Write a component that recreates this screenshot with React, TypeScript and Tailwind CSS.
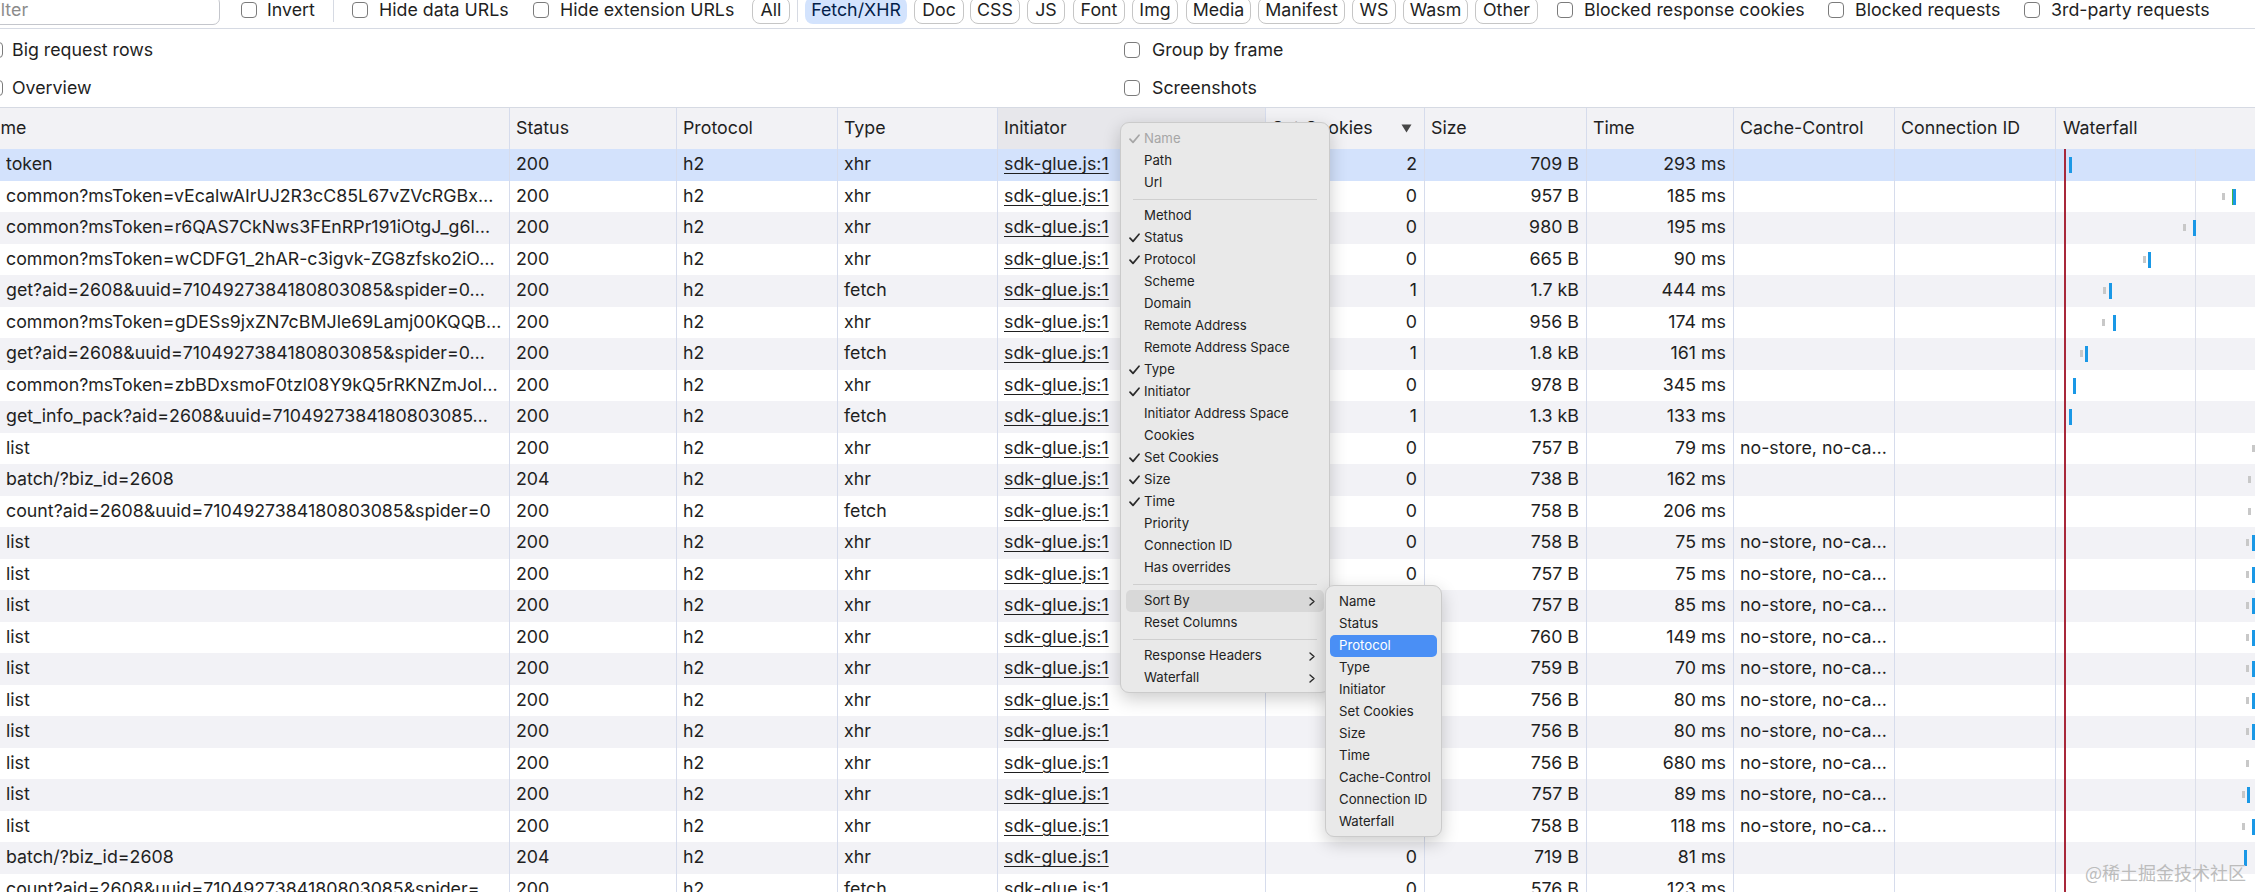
import React from "react";

type Bar = { x: number; k: "b" | "g" | "e" };
type Row = {
  name: string;
  status: string;
  type: string;
  cookies: string;
  size: string;
  time: string;
  cache?: string;
  bars: Bar[];
};

const NS = "no-store, no-ca…";
const GET = "get?aid=2608&uuid=7104927384180803085&spider=0…";
const COUNT = "count?aid=2608&uuid=7104927384180803085&spider=0";

const ROWS: Row[] = [
  { name: "token", status: "200", type: "xhr", cookies: "2", size: "709 B", time: "293 ms", bars: [{ x: 13, k: "b" }] },
  { name: "common?msToken=vEcalwAIrUJ2R3cC85L67vZVcRGBx…", status: "200", type: "xhr", cookies: "0", size: "957 B", time: "185 ms", bars: [{ x: 166, k: "g" }, { x: 176, k: "e" }, { x: 177, k: "b" }] },
  { name: "common?msToken=r6QAS7CkNws3FEnRPr191iOtgJ_g6l…", status: "200", type: "xhr", cookies: "0", size: "980 B", time: "195 ms", bars: [{ x: 127, k: "g" }, { x: 137, k: "b" }] },
  { name: "common?msToken=wCDFG1_2hAR-c3igvk-ZG8zfsko2iO…", status: "200", type: "xhr", cookies: "0", size: "665 B", time: "90 ms", bars: [{ x: 87, k: "g" }, { x: 92, k: "b" }] },
  { name: GET, status: "200", type: "fetch", cookies: "1", size: "1.7 kB", time: "444 ms", bars: [{ x: 47, k: "g" }, { x: 53, k: "b" }] },
  { name: "common?msToken=gDESs9jxZN7cBMJle69Lamj00KQQB…", status: "200", type: "xhr", cookies: "0", size: "956 B", time: "174 ms", bars: [{ x: 46, k: "g" }, { x: 57, k: "b" }] },
  { name: GET, status: "200", type: "fetch", cookies: "1", size: "1.8 kB", time: "161 ms", bars: [{ x: 24, k: "g" }, { x: 29, k: "b" }] },
  { name: "common?msToken=zbBDxsmoF0tzl08Y9kQ5rRKNZmJol…", status: "200", type: "xhr", cookies: "0", size: "978 B", time: "345 ms", bars: [{ x: 17, k: "b" }] },
  { name: "get_info_pack?aid=2608&uuid=7104927384180803085…", status: "200", type: "fetch", cookies: "1", size: "1.3 kB", time: "133 ms", bars: [{ x: 13, k: "b" }] },
  { name: "list", status: "200", type: "xhr", cookies: "0", size: "757 B", time: "79 ms", cache: NS, bars: [{ x: 196, k: "g" }] },
  { name: "batch/?biz_id=2608", status: "204", type: "xhr", cookies: "0", size: "738 B", time: "162 ms", bars: [{ x: 192, k: "g" }] },
  { name: COUNT, status: "200", type: "fetch", cookies: "0", size: "758 B", time: "206 ms", bars: [{ x: 192, k: "g" }] },
  { name: "list", status: "200", type: "xhr", cookies: "0", size: "758 B", time: "75 ms", cache: NS, bars: [{ x: 190, k: "g" }, { x: 196, k: "b" }] },
  { name: "list", status: "200", type: "xhr", cookies: "0", size: "757 B", time: "75 ms", cache: NS, bars: [{ x: 190, k: "g" }, { x: 196, k: "b" }] },
  { name: "list", status: "200", type: "xhr", cookies: "0", size: "757 B", time: "85 ms", cache: NS, bars: [{ x: 190, k: "g" }, { x: 196, k: "b" }] },
  { name: "list", status: "200", type: "xhr", cookies: "0", size: "760 B", time: "149 ms", cache: NS, bars: [{ x: 190, k: "g" }, { x: 196, k: "b" }] },
  { name: "list", status: "200", type: "xhr", cookies: "0", size: "759 B", time: "70 ms", cache: NS, bars: [{ x: 190, k: "g" }, { x: 196, k: "b" }] },
  { name: "list", status: "200", type: "xhr", cookies: "0", size: "756 B", time: "80 ms", cache: NS, bars: [{ x: 190, k: "g" }, { x: 196, k: "b" }] },
  { name: "list", status: "200", type: "xhr", cookies: "0", size: "756 B", time: "80 ms", cache: NS, bars: [{ x: 190, k: "g" }, { x: 196, k: "b" }] },
  { name: "list", status: "200", type: "xhr", cookies: "0", size: "756 B", time: "680 ms", cache: NS, bars: [{ x: 190, k: "g" }] },
  { name: "list", status: "200", type: "xhr", cookies: "0", size: "757 B", time: "89 ms", cache: NS, bars: [{ x: 186, k: "g" }, { x: 191, k: "b" }] },
  { name: "list", status: "200", type: "xhr", cookies: "0", size: "758 B", time: "118 ms", cache: NS, bars: [{ x: 186, k: "g" }, { x: 196, k: "b" }] },
  { name: "batch/?biz_id=2608", status: "204", type: "xhr", cookies: "0", size: "719 B", time: "81 ms", bars: [{ x: 188, k: "b" }] },
  { name: COUNT + "…", status: "200", type: "fetch", cookies: "0", size: "576 B", time: "123 ms", bars: [] },
];

const GRID = "grid grid-cols-[510px_167px_161px_160px_268px_159px_162px_147px_161px_161px_1fr]";
const CELL = "flex items-center overflow-hidden whitespace-nowrap border-r border-[#d6dcec] px-[6px]";
const NUM = "flex items-center justify-end overflow-hidden whitespace-nowrap border-r border-[#d6dcec] pl-[6px] pr-[7px]";

function Box() {
  return <span className="h-[16px] w-[16px] shrink-0 rounded-[4px] border border-[#7b7b7b] bg-white" />;
}

function Pill({ label, cls, active }: { label: string; cls: string; active?: boolean }) {
  return (
    <span
      className={`flex h-[27px] shrink-0 items-center justify-center rounded-[8px] border ${cls} ${
        active ? "border-transparent bg-[#d3e3fd] text-[#041e49]" : "border-[#c6c6c6] bg-white"
      }`}
    >
      {label}
    </span>
  );
}

function Toolbar() {
  return (
    <div className="h-[29px] overflow-hidden border-b border-[#d6dae3]">
      <div className="-mt-[6px] flex h-[32px] items-center whitespace-nowrap">
        <div className="-ml-[20px] flex h-[29px] w-[240px] shrink-0 items-center rounded-[7px] border border-[#c4c6cc] bg-white px-[5px] text-[#8b8b8b]">
          Filter
        </div>
        <label className="ml-[21px] flex w-[92px] shrink-0 items-center gap-[10px]"><Box />Invert</label>
        <span className="h-[24px] w-px shrink-0 bg-[#d6dae3]" />
        <label className="ml-[18px] flex w-[181px] shrink-0 items-center gap-[11px]"><Box />Hide data URLs</label>
        <label className="flex w-[219px] shrink-0 items-center gap-[11px]"><Box />Hide extension URLs</label>
        <Pill label="All" cls="w-[38px]" />
        <span className="ml-[7px] h-[24px] w-px shrink-0 bg-[#d6dae3]" />
        <span className="ml-[7px]"><Pill label="Fetch/XHR" cls="w-[102px]" active /></span>
        <span className="ml-[7px]"><Pill label="Doc" cls="w-[50px]" /></span>
        <span className="ml-[6px]"><Pill label="CSS" cls="w-[50px]" /></span>
        <span className="ml-[7px]"><Pill label="JS" cls="w-[38px]" /></span>
        <span className="ml-[8px]"><Pill label="Font" cls="w-[52px]" /></span>
        <span className="ml-[7px]"><Pill label="Img" cls="w-[46px]" /></span>
        <span className="ml-[8px]"><Pill label="Media" cls="w-[65px]" /></span>
        <span className="ml-[7px]"><Pill label="Manifest" cls="w-[87px]" /></span>
        <span className="ml-[7px]"><Pill label="WS" cls="w-[44px]" /></span>
        <span className="ml-[7px]"><Pill label="Wasm" cls="w-[65px]" /></span>
        <span className="ml-[7px]"><Pill label="Other" cls="w-[63px]" /></span>
        <label className="ml-[19px] flex w-[271px] shrink-0 items-center gap-[11px]"><Box />Blocked response cookies</label>
        <label className="flex w-[196px] shrink-0 items-center gap-[11px]"><Box />Blocked requests</label>
        <label className="flex shrink-0 items-center gap-[11px]"><Box />3rd-party requests</label>
      </div>
    </div>
  );
}

function Options() {
  return (
    <div className="flex border-b border-[#d6dae3] pt-[2px]">
      <div className="flex w-[1124px] shrink-0 flex-col">
        <label className="-ml-[13px] flex h-[38px] items-center gap-[9px]"><Box />Big request rows</label>
        <label className="-ml-[13px] flex h-[38px] items-center gap-[9px]"><Box />Overview</label>
      </div>
      <div className="flex flex-col">
        <label className="flex h-[38px] items-center gap-[12px]"><Box />Group by frame</label>
        <label className="flex h-[38px] items-center gap-[12px]"><Box />Screenshots</label>
      </div>
    </div>
  );
}

function Header() {
  return (
    <div className={`${GRID} h-[41px] bg-[#f2f2f5]`}>
      <div className={CELL}><span className="-ml-[29px]">Name</span></div>
      <div className={CELL}>Status</div>
      <div className={CELL}>Protocol</div>
      <div className={CELL}>Type</div>
      <div className={`${CELL} bg-[#e7e7eb]`}>Initiator</div>
      <div className={`${CELL} justify-between pr-[12px]`}>
        <span>Set Cookies</span>
        <svg width="11" height="9" viewBox="0 0 11 9"><path d="M0.5 0.5 H10.5 L5.5 8.5 Z" fill="#474747" /></svg>
      </div>
      <div className={CELL}>Size</div>
      <div className={CELL}>Time</div>
      <div className={CELL}>Cache-Control</div>
      <div className={CELL}>Connection ID</div>
      <div className="flex items-center px-[7px]">Waterfall</div>
    </div>
  );
}

function Waterfall({ bars }: { bars: Bar[] }) {
  return (
    <div className="relative overflow-hidden">
      <span className="absolute inset-y-0 left-[8px] w-[2px] bg-[#a8283a]" />
      <span className="absolute inset-y-0 left-[139px] w-px bg-[#dcdfea]" />
      {bars.map((b, i) =>
        b.k === "b" ? (
          <span key={i} className="absolute top-[8px] h-[16px] w-[3px] bg-[#1a98e6]" style={{ left: b.x }} />
        ) : b.k === "g" ? (
          <span key={i} className="absolute top-[12px] h-[7px] w-[3px] bg-[#c8c8c8]" style={{ left: b.x }} />
        ) : (
          <span key={i} className="absolute top-[8px] h-[16px] w-px bg-[#45b649]" style={{ left: b.x }} />
        )
      )}
    </div>
  );
}

function Table() {
  return (
    <div>
      <Header />
      {ROWS.map((r, i) => (
        <div
          key={i}
          className={`${GRID} h-[31.5px] ${i === 0 ? "bg-[#d3e2fc]" : i % 2 === 1 ? "bg-white" : "bg-[#f2f2f6]"}`}
        >
          <div className={CELL}><span className="truncate">{r.name}</span></div>
          <div className={CELL}>{r.status}</div>
          <div className={CELL}>h2</div>
          <div className={CELL}>{r.type}</div>
          <div className={CELL}>
            <span className="underline decoration-1 underline-offset-[3px]">sdk-glue.js:1</span>
          </div>
          <div className={NUM}>{r.cookies}</div>
          <div className={NUM}>{r.size}</div>
          <div className={NUM}>{r.time}</div>
          <div className={CELL}><span className="truncate">{r.cache ?? ""}</span></div>
          <div className={CELL} />
          <Waterfall bars={r.bars} />
        </div>
      ))}
    </div>
  );
}

function Check({ muted }: { muted?: boolean }) {
  return (
    <svg className="absolute left-[3px] top-[6px]" width="11" height="10" viewBox="0 0 11 10">
      <path d="M1 5.2 L4 8.4 L10 1.2" fill="none" stroke={muted ? "#a6a6a6" : "#2a2a2a"} strokeWidth="1.7" strokeLinecap="round" strokeLinejoin="round" />
    </svg>
  );
}

function Chevron() {
  return (
    <svg className="absolute right-[9px] top-[7px]" width="6" height="9" viewBox="0 0 6 9">
      <path d="M1 1 L5 4.5 L1 8" fill="none" stroke="#2a2a2a" strokeWidth="1.4" strokeLinecap="round" strokeLinejoin="round" />
    </svg>
  );
}

type MenuItem = { label: string; checked?: boolean; muted?: boolean; sub?: boolean; hover?: boolean } | "sep";

const MENU: MenuItem[] = [
  { label: "Name", checked: true, muted: true },
  { label: "Path" },
  { label: "Url" },
  "sep",
  { label: "Method" },
  { label: "Status", checked: true },
  { label: "Protocol", checked: true },
  { label: "Scheme" },
  { label: "Domain" },
  { label: "Remote Address" },
  { label: "Remote Address Space" },
  { label: "Type", checked: true },
  { label: "Initiator", checked: true },
  { label: "Initiator Address Space" },
  { label: "Cookies" },
  { label: "Set Cookies", checked: true },
  { label: "Size", checked: true },
  { label: "Time", checked: true },
  { label: "Priority" },
  { label: "Connection ID" },
  { label: "Has overrides" },
  "sep",
  { label: "Sort By", sub: true, hover: true },
  { label: "Reset Columns" },
  "sep",
  { label: "Response Headers", sub: true },
  { label: "Waterfall", sub: true },
];

function ColumnMenu() {
  return (
    <div className="absolute left-[1120px] top-[122px] w-[210px] rounded-[9px] border border-[#cbcbcb] bg-[#e9e9e9] px-[5px] pb-[3px] pt-[5px] text-[13.2px] text-[#222] shadow-[0_6px_18px_rgba(0,0,0,0.2)]">
      {MENU.map((m, i) =>
        m === "sep" ? (
          <div key={i} className="flex h-[11px] items-center px-[7px]">
            <div className="h-px w-full bg-[#cfcfcf]" />
          </div>
        ) : (
          <div
            key={i}
            className={`relative flex h-[22px] items-center rounded-[5px] pl-[18px] ${m.hover ? "bg-[#d8d8d8]" : ""} ${
              m.muted ? "text-[#a6a6a6]" : ""
            }`}
          >
            {m.checked && <Check muted={m.muted} />}
            {m.label}
            {m.sub && <Chevron />}
          </div>
        )
      )}
    </div>
  );
}

const SORT = ["Name", "Status", "Protocol", "Type", "Initiator", "Set Cookies", "Size", "Time", "Cache-Control", "Connection ID", "Waterfall"];

function SortMenu() {
  return (
    <div className="absolute left-[1325px] top-[585px] w-[117px] rounded-[9px] border border-[#cbcbcb] bg-[#e9e9e9] px-[4px] pb-[3px] pt-[5px] text-[13.2px] text-[#222] shadow-[0_6px_18px_rgba(0,0,0,0.2)]">
      {SORT.map((s) => (
        <div
          key={s}
          className={`flex h-[22px] items-center rounded-[5px] pl-[9px] ${s === "Protocol" ? "bg-[#4a8ff5] text-white" : ""}`}
        >
          {s}
        </div>
      ))}
    </div>
  );
}

export default function App() {
  return (
    <div className="relative h-[892px] w-[2255px] overflow-hidden bg-white font-['Inter','Noto_Sans',sans-serif] text-[17.8px] text-[#1f1f1f] proportional-nums">
      <Toolbar />
      <Options />
      <Table />
      <ColumnMenu />
      <SortMenu />
      <div className="absolute bottom-[6px] right-[9px] font-['Noto_Sans_CJK_SC',sans-serif] text-[18px] text-[#bcbcbc]">
        @稀土掘金技术社区
      </div>
    </div>
  );
}
